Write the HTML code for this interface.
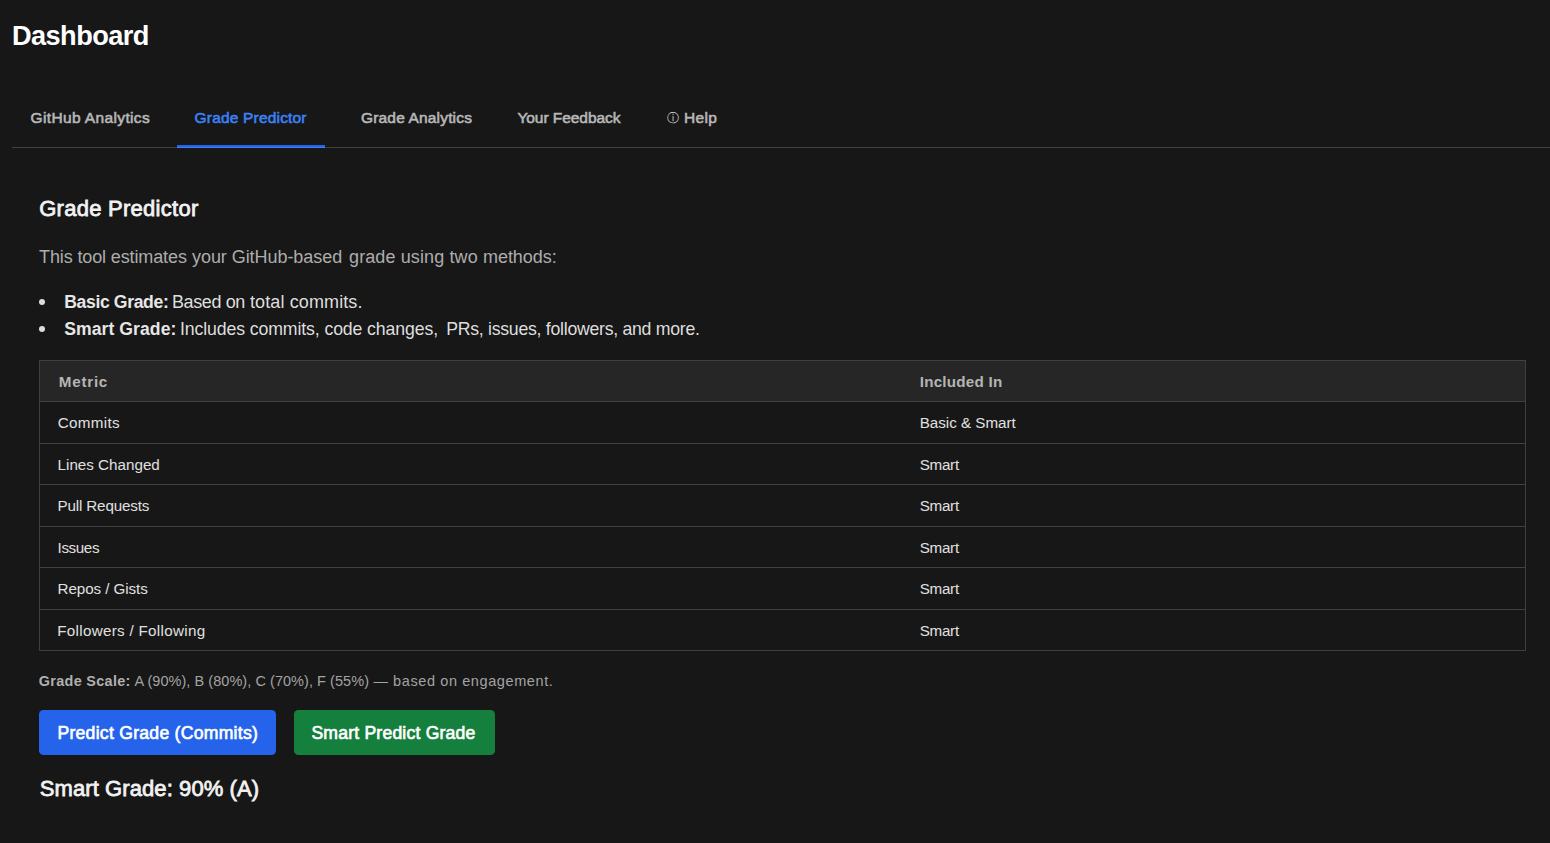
<!DOCTYPE html>
<html lang="en">
<head>
<meta charset="utf-8">
<title>Dashboard</title>
<style>
*{box-sizing:border-box;margin:0;padding:0}
html,body{width:1550px;height:843px;overflow:hidden;background:#171717;color:#ececec;font-family:"Liberation Sans","DejaVu Sans",sans-serif}
.t{position:absolute;white-space:nowrap;line-height:1;text-decoration:none;display:block;font-style:normal}
nav{position:absolute;left:12px;top:88px;width:1538px;height:60px;border-bottom:1px solid #404040}
nav .ind{position:absolute;left:165px;top:57px;width:148px;height:3px;background:linear-gradient(#2563eb 0,#2563eb 2px,#3b82f6 2px)}
ul{list-style:none}
li i{position:absolute;left:39px;width:6.4px;height:6.4px;border-radius:50%;background:#dcdcdc}
.grid{position:absolute;left:39px;top:360px;width:1487px;height:291px;border:1px solid #404040}
.grid .hd{position:absolute;left:0;top:0;width:1485px;height:40px;background:#262626}
.grid .ln{position:absolute;left:0;width:1485px;height:1px;background:#404040}
table,thead,tbody,tr,th,td{display:block;font-weight:400}
button{position:absolute;top:710px;height:45px;border:0;border-radius:4.5px}
#btn1{left:39px;width:237px;background:#2563eb}
#btn2{left:294px;width:201px;background:#15803d}
#h1{left:12.00px;top:22.48px;font-size:27.2px;letter-spacing:-0.585px;font-weight:700;color:#ffffff}
#h2{left:39.20px;top:198.48px;font-size:22px;letter-spacing:0.270px;font-weight:400;color:#f2f2f2;-webkit-text-stroke:0.78px #f2f2f2}
#lead{left:39.00px;top:247.86px;font-size:18px;letter-spacing:-0.120px;font-weight:400;color:#adadad}
#l1b{left:64.20px;top:293.70px;font-size:17.6px;letter-spacing:-0.360px;font-weight:700;color:#e6e6e6}
#l1r{left:172.00px;top:292.86px;font-size:18px;letter-spacing:-0.386px;font-weight:400;color:#dedede}
#l2b{left:64.20px;top:320.70px;font-size:17.6px;letter-spacing:0.065px;font-weight:700;color:#e6e6e6}
#l2r{left:180.00px;top:320.62px;font-size:17.7px;letter-spacing:-0.114px;font-weight:400;color:#dedede}
#scb{left:38.80px;top:673.91px;font-size:14.4px;letter-spacing:0.327px;font-weight:700;color:#b0b0b0}
#scr{left:134.40px;top:673.83px;font-size:14.5px;letter-spacing:0.052px;font-weight:400;color:#a3a3a3}
#b1{left:18.40px;top:15.10px;font-size:17.6px;letter-spacing:0.270px;font-weight:400;color:#ffffff;-webkit-text-stroke:0.64px #ffffff}
#b2{left:17.40px;top:15.10px;font-size:17.6px;letter-spacing:0.200px;font-weight:400;color:#ffffff;-webkit-text-stroke:0.64px #ffffff}
#h3{left:39.80px;top:778.38px;font-size:22px;letter-spacing:0.085px;font-weight:400;color:#f2f2f2;-webkit-text-stroke:0.78px #f2f2f2}
#n1{left:18.60px;top:22.38px;font-size:15.5px;letter-spacing:0.360px;font-weight:400;color:#b8b8b8;-webkit-text-stroke:0.58px #b8b8b8}
#n2{left:182.60px;top:22.38px;font-size:15.5px;letter-spacing:0.180px;font-weight:400;color:#3b82f6;-webkit-text-stroke:0.58px #3b82f6}
#n3{left:349.00px;top:22.38px;font-size:15.5px;letter-spacing:0.167px;font-weight:400;color:#b8b8b8;-webkit-text-stroke:0.58px #b8b8b8}
#n4{left:505.40px;top:22.38px;font-size:15.5px;letter-spacing:-0.045px;font-weight:400;color:#b8b8b8;-webkit-text-stroke:0.58px #b8b8b8}
#n5i{left:654.90px;top:24.05px;font-size:12px;letter-spacing:0.000px;font-weight:400;color:#d8d8d8;font-family:"DejaVu Sans",sans-serif}
#n5{left:672.00px;top:22.38px;font-size:15.5px;letter-spacing:0.360px;font-weight:400;color:#b8b8b8;-webkit-text-stroke:0.58px #b8b8b8}
#r0a{left:58.80px;top:374.03px;font-size:15.2px;letter-spacing:0.756px;font-weight:700;color:#b5b5b5}
#r0b{left:919.70px;top:374.03px;font-size:15.2px;letter-spacing:0.234px;font-weight:700;color:#b5b5b5}
#r1a{left:57.80px;top:415.13px;font-size:15.2px;letter-spacing:0.330px;font-weight:400;color:#e0e0e0}
#r1b{left:919.70px;top:415.13px;font-size:15.2px;letter-spacing:-0.015px;font-weight:400;color:#e0e0e0}
#r2a{left:57.60px;top:457.03px;font-size:15.2px;letter-spacing:-0.000px;font-weight:400;color:#e0e0e0}
#r2b{left:919.70px;top:457.03px;font-size:15.2px;letter-spacing:-0.270px;font-weight:400;color:#e0e0e0}
#r3a{left:57.60px;top:498.13px;font-size:15.2px;letter-spacing:-0.165px;font-weight:400;color:#e0e0e0}
#r3b{left:919.70px;top:498.13px;font-size:15.2px;letter-spacing:-0.270px;font-weight:400;color:#e0e0e0}
#r4a{left:57.60px;top:539.73px;font-size:15.2px;letter-spacing:-0.396px;font-weight:400;color:#e0e0e0}
#r4b{left:919.70px;top:539.73px;font-size:15.2px;letter-spacing:-0.270px;font-weight:400;color:#e0e0e0}
#r5a{left:57.60px;top:580.83px;font-size:15.2px;letter-spacing:-0.075px;font-weight:400;color:#e0e0e0}
#r5b{left:919.70px;top:580.83px;font-size:15.2px;letter-spacing:-0.270px;font-weight:400;color:#e0e0e0}
#r6a{left:57.20px;top:622.93px;font-size:15.2px;letter-spacing:0.306px;font-weight:400;color:#e0e0e0}
#r6b{left:919.70px;top:622.93px;font-size:15.2px;letter-spacing:-0.270px;font-weight:400;color:#e0e0e0}
#scr2{left:373.40px;top:673.83px;font-size:14.5px;letter-spacing:0.597px;font-weight:400;color:#a3a3a3}
#lead2{left:192.00px;top:247.86px;font-size:18px;letter-spacing:-0.056px;font-weight:400;color:#adadad}
#lead3{left:349.00px;top:247.86px;font-size:18px;letter-spacing:0.116px;font-weight:400;color:#adadad}
#lead4{left:483.00px;top:247.86px;font-size:18px;letter-spacing:-0.051px;font-weight:400;color:#adadad}
#l1r2{left:250.00px;top:292.86px;font-size:18px;letter-spacing:0.111px;font-weight:400;color:#dedede}
#l2r2{left:446.20px;top:320.62px;font-size:17.7px;letter-spacing:-0.272px;font-weight:400;color:#dedede}
</style>
</head>
<body>
<h1 class="t" id="h1">Dashboard</h1>
<nav><div class="ind"></div><a class="t" id="n1">GitHub Analytics</a><a class="t" id="n2">Grade Predictor</a><a class="t" id="n3">Grade Analytics</a><a class="t" id="n4">Your Feedback</a><span class="t" id="n5i">ⓘ</span><a class="t" id="n5">Help</a></nav>
<section>
<h2 class="t" id="h2">Grade Predictor</h2>
<p><span class="t" id="lead">This tool estimates</span> <span class="t" id="lead2">your GitHub-based</span> <span class="t" id="lead3">grade using two</span> <span class="t" id="lead4">methods:</span></p>
<ul>
<li><i style="top:299px"></i><b class="t" id="l1b">Basic Grade:</b> <span class="t" id="l1r">Based on</span> <span class="t" id="l1r2">total commits.</span></li>
<li><i style="top:326px"></i><b class="t" id="l2b">Smart Grade:</b> <span class="t" id="l2r">Includes commits, code changes,</span> <span class="t" id="l2r2">PRs, issues, followers, and more.</span></li>
</ul>
<div class="grid"><div class="hd"></div>
<div class="ln" style="top:40px"></div><div class="ln" style="top:82px"></div><div class="ln" style="top:123px"></div><div class="ln" style="top:165px"></div><div class="ln" style="top:206px"></div><div class="ln" style="top:248px"></div>
</div>
<table><thead><tr><th><span class="t" id="r0a">Metric</span></th><th><span class="t" id="r0b">Included In</span></th></tr></thead><tbody><tr><td><span class="t" id="r1a">Commits</span></td><td><span class="t" id="r1b">Basic &amp; Smart</span></td></tr><tr><td><span class="t" id="r2a">Lines Changed</span></td><td><span class="t" id="r2b">Smart</span></td></tr><tr><td><span class="t" id="r3a">Pull Requests</span></td><td><span class="t" id="r3b">Smart</span></td></tr><tr><td><span class="t" id="r4a">Issues</span></td><td><span class="t" id="r4b">Smart</span></td></tr><tr><td><span class="t" id="r5a">Repos / Gists</span></td><td><span class="t" id="r5b">Smart</span></td></tr><tr><td><span class="t" id="r6a">Followers / Following</span></td><td><span class="t" id="r6b">Smart</span></td></tr></tbody></table>
<p><b class="t" id="scb">Grade Scale:</b> <span class="t" id="scr">A (90%), B (80%), C (70%), F (55%)</span> <span class="t" id="scr2">— based on engagement.</span></p>
<button id="btn1"><span class="t" id="b1">Predict Grade (Commits)</span></button><button id="btn2"><span class="t" id="b2">Smart Predict Grade</span></button>
<h3 class="t" id="h3">Smart Grade: 90% (A)</h3>
</section>
</body>
</html>
